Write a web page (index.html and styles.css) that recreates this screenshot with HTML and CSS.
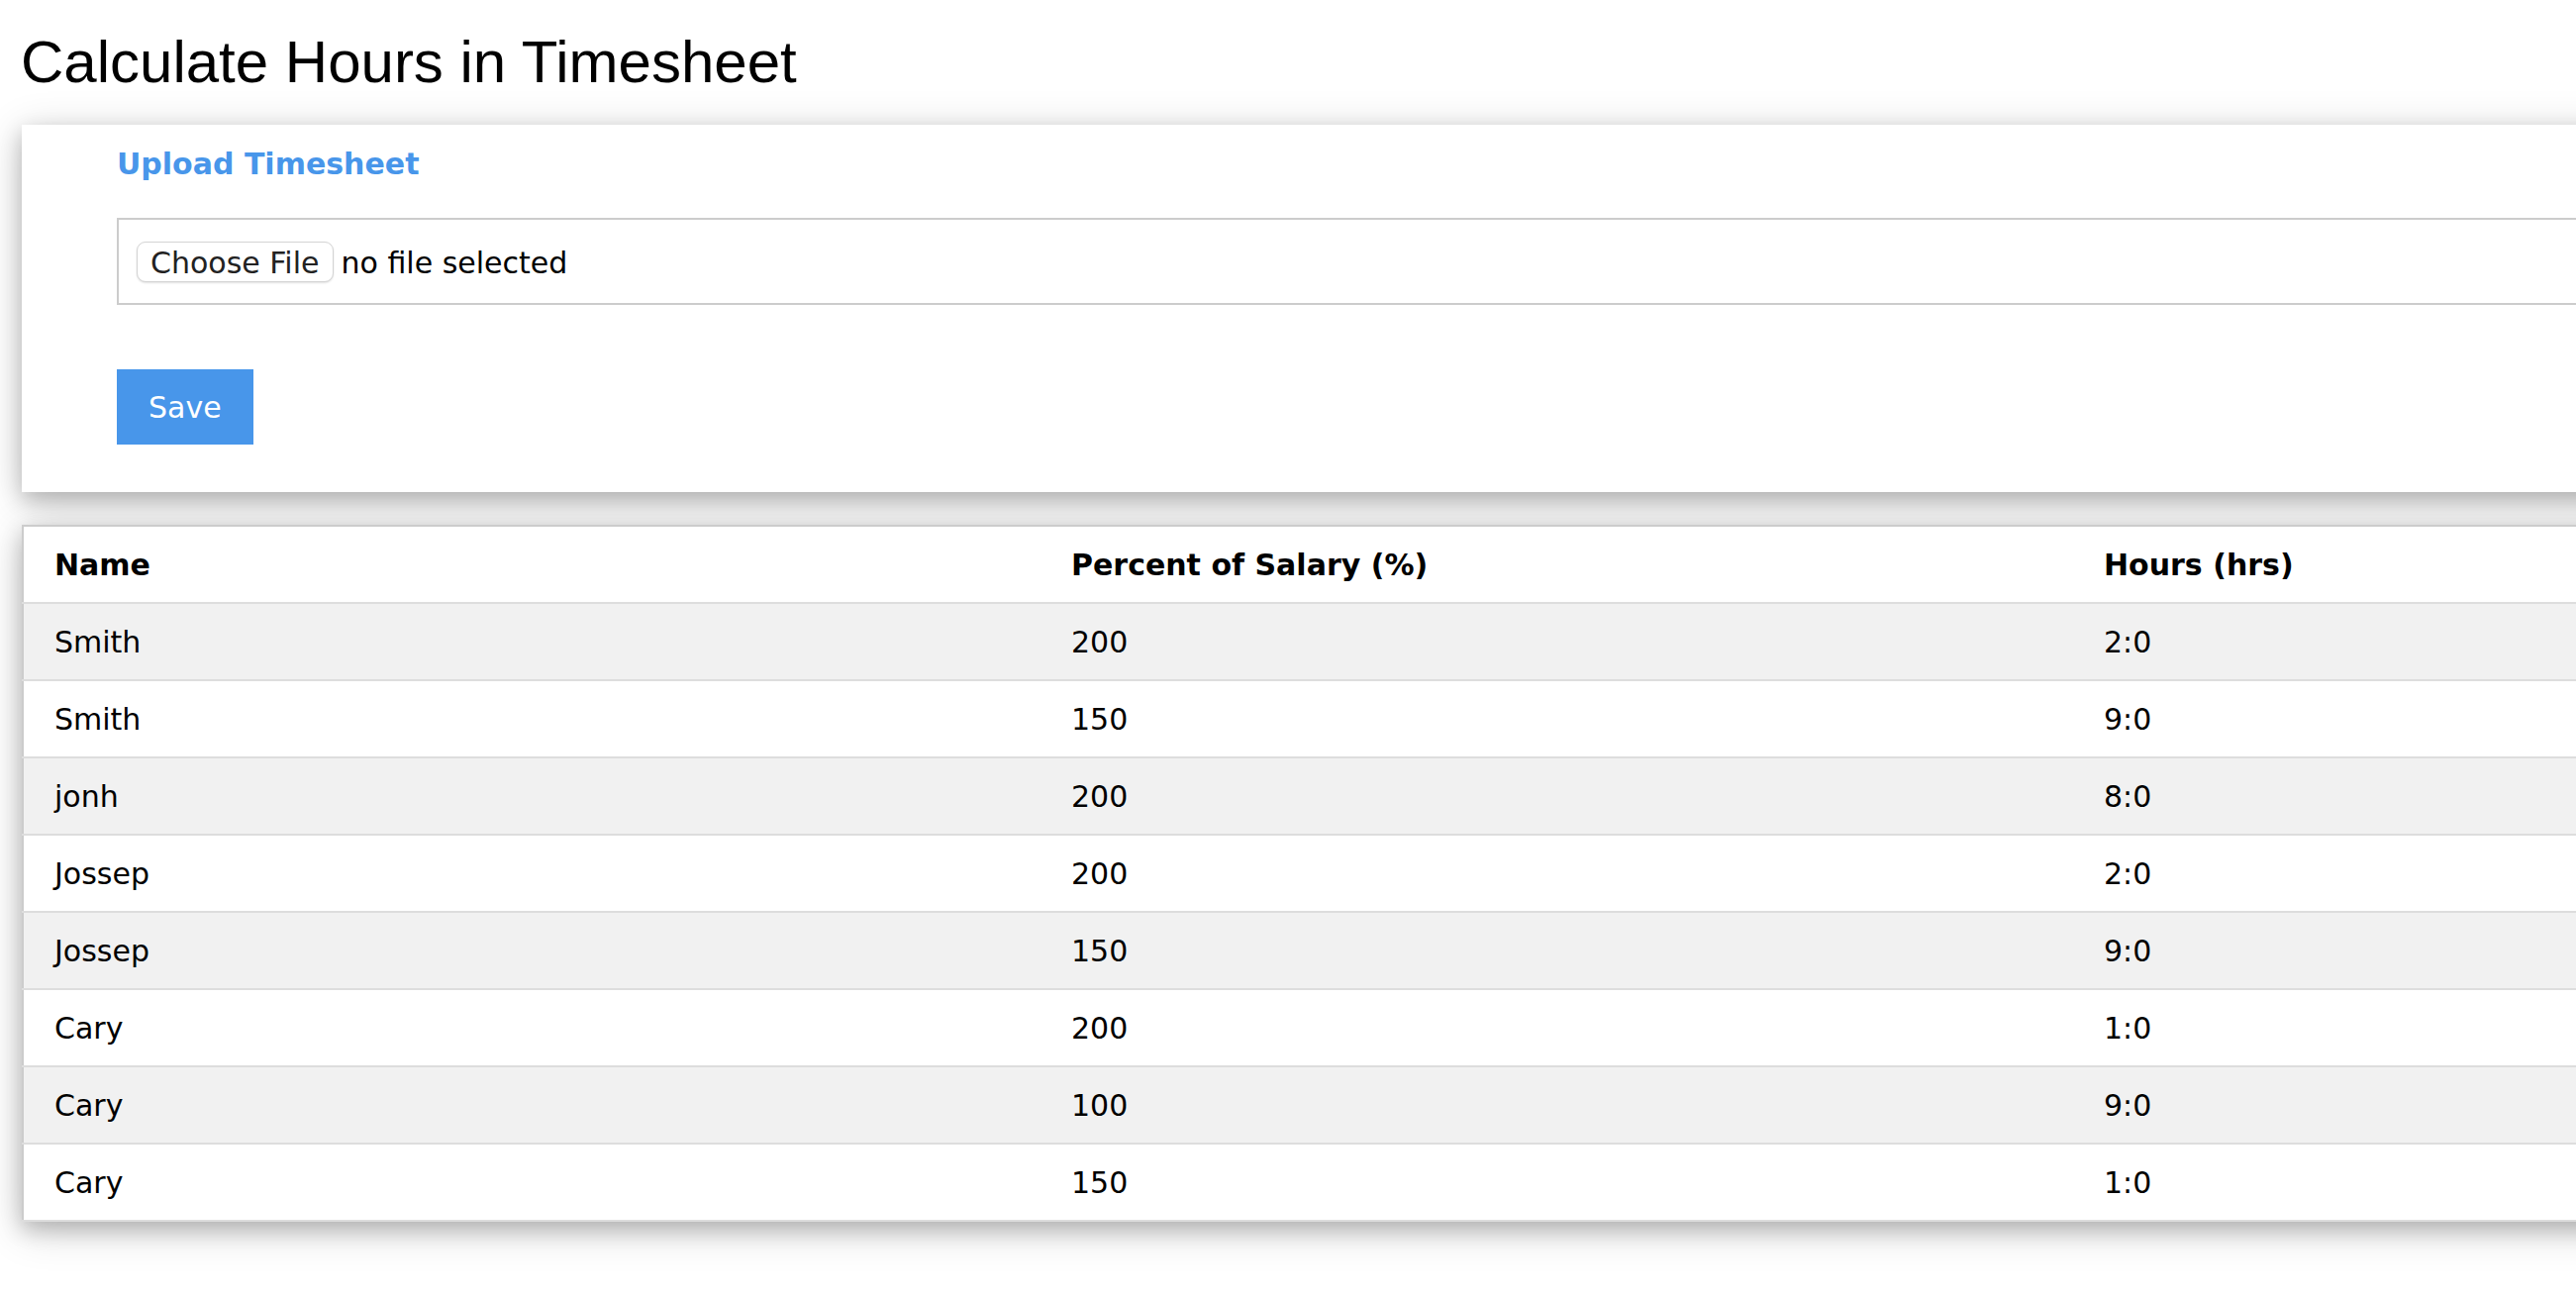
FILE: index.html
```html
<!DOCTYPE html>
<html lang="en">
<head>
<meta charset="utf-8">
<title>Calculate Hours in Timesheet</title>
<link rel="stylesheet" href="styles.css">
</head>
<body>
<div class="page">
  <h2 class="title">Calculate Hours in Timesheet</h2>

  <div class="card upload-card">
    <form class="upload-form">
      <label class="upload-label">Upload Timesheet</label>
      <div class="file-box">
        <span class="file-btn">Choose File</span>
        <span class="file-status">no file selected</span>
      </div>
      <button class="save-btn" type="button">Save</button>
    </form>
  </div>

  <table class="card data-table">
    <colgroup>
      <col class="col-a">
      <col class="col-b">
      <col class="col-c">
    </colgroup>
    <tr><th>Name</th><th>Percent of Salary (%)</th><th>Hours (hrs)</th></tr>
    <tr><td>Smith</td><td>200</td><td>2:0</td></tr>
    <tr><td>Smith</td><td>150</td><td>9:0</td></tr>
    <tr><td>jonh</td><td>200</td><td>8:0</td></tr>
    <tr><td>Jossep</td><td>200</td><td>2:0</td></tr>
    <tr><td>Jossep</td><td>150</td><td>9:0</td></tr>
    <tr><td>Cary</td><td>200</td><td>1:0</td></tr>
    <tr><td>Cary</td><td>100</td><td>9:0</td></tr>
    <tr><td>Cary</td><td>150</td><td>1:0</td></tr>
  </table>
</div>
</body>
</html>
```

FILE: styles.css
```css
html {
  overflow: hidden;
  background: #fff;
}

body {
  margin: 0;
  padding: 0;
  font-family: "DejaVu Sans", Verdana, sans-serif;
  font-size: 30px;
  line-height: 44px;
  color: #000;
}

.page {
  padding: 0 0 80px 22px;
  width: 3200px;
}

.title {
  font-family: "Liberation Sans", Arial, sans-serif;
  font-weight: 400;
  font-size: 60px;
  line-height: 90px;
  margin: 18px 0 18px -1px;
}

.card {
  background: #fff;
  box-shadow: 0 8px 20px 0 rgba(0, 0, 0, 0.2), 0 8px 40px 0 rgba(0, 0, 0, 0.19);
}

.upload-card {
  width: 3136px;
  box-sizing: border-box;
  padding: 18px 40px 48px 96px;
}

.upload-form {
  margin: 0;
}

.upload-label {
  display: block;
  font-weight: bold;
  color: #4896ea;
}

.file-box {
  margin-top: 32px;
  height: 88px;
  box-sizing: border-box;
  border: 2px solid #ccc;
  display: flex;
  align-items: center;
  padding-left: 18px;
}

.file-btn {
  height: 41px;
  box-sizing: border-box;
  border: 1px solid #d4d4d4;
  border-radius: 9px;
  padding: 2px 13px 0;
  line-height: 37px;
  color: #222;
  background: #fff;
  box-shadow: 0 1px 2px rgba(0, 0, 0, 0.12);
}

.file-status {
  margin-left: 8px;
  padding-top: 2px;
  line-height: 37px;
}

.save-btn {
  display: block;
  margin-top: 65px;
  border: none;
  background: #4896ea;
  color: #fff;
  font: inherit;
  line-height: 44px;
  padding: 17px 32px 15px;
  cursor: pointer;
}

.data-table {
  margin-top: 33px;
  width: 3136px;
  table-layout: fixed;
  border-collapse: collapse;
  border: 2px solid #ccc;
}

.col-a, .col-b {
  width: 1043px;
}

.data-table tr {
  border-bottom: 2px solid #ddd;
}

.data-table tr:nth-child(even) {
  background: #f1f1f1;
}

.data-table th,
.data-table td {
  padding: 17px 16px 15px;
  text-align: left;
  vertical-align: top;
}

.data-table th:first-child,
.data-table td:first-child {
  padding-left: 31px;
}

.data-table th {
  font-weight: bold;
}
```
